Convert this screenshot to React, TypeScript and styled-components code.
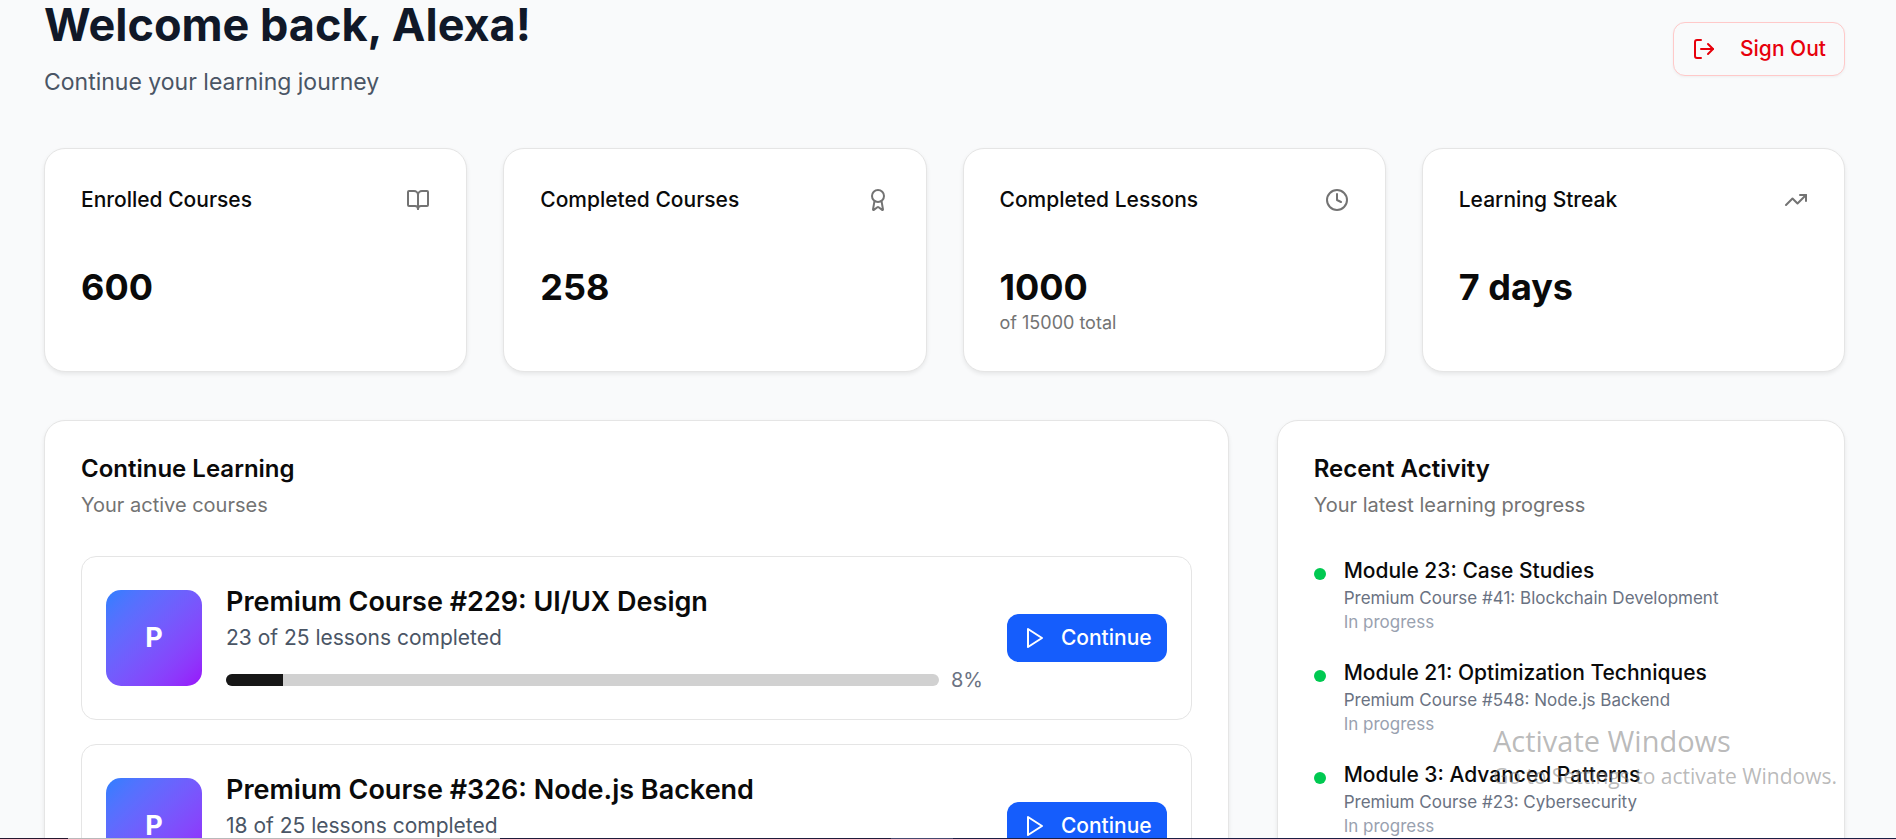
import React from "react";
import styled, { createGlobalStyle } from "styled-components";
import { Award, BookOpen, Clock, LogOut, TrendingUp } from "lucide-react";

const GlobalStyle = createGlobalStyle`
  *, *::before, *::after { box-sizing: border-box; }
  html, body { height: 100%; }
  body {
    margin: 0;
    overflow: hidden;
    background: #f9fafb;
    color: #0a0a0a;
    font-family: Inter, "Liberation Sans", sans-serif;
  }
  #root { height: 100%; }
  h1, h2, h3, p, ul { margin: 0; padding: 0; }
  ul { list-style: none; }
  button { font-family: inherit; cursor: pointer; }
`;

const Viewport = styled.div`
  position: relative;
  display: flex;
  flex-direction: column;
  height: 100%;
`;

const ScrollArea = styled.div`
  flex: 1;
  min-height: 0;
  overflow: hidden;
`;

const TaskbarEdge = styled.div`
  display: flex;
  flex: none;
  height: 1px;
  background: #1c1f45;
`;

const EdgeSegment = styled.span<{ $width: number; $tone: string }>`
  width: ${({ $width }) => $width}px;
  background: ${({ $tone }) => $tone};
`;

const Page = styled.main`
  display: flex;
  flex-direction: column;
  gap: 48px;
  margin-top: -2px;
  padding: 0 51px 48px 44px;
`;

const Header = styled.header`
  display: flex;
  align-items: center;
  justify-content: space-between;
`;

const Heading = styled.div`
  display: flex;
  flex-direction: column;
  gap: 12px;
`;

const PageTitle = styled.h1`
  font-size: 45px;
  line-height: 54px;
  font-weight: 700;
  color: #101828;
`;

const PageSubtitle = styled.p`
  font-size: 23px;
  line-height: 36px;
  color: #4a5565;
`;

const SignOutButton = styled.button`
  display: flex;
  align-items: center;
  gap: 24px;
  height: 54px;
  padding: 0 18px;
  border: 1px solid #ffc9c9;
  border-radius: 12px;
  background: #f9fafb;
  box-shadow: 0 1px 3px rgba(0, 0, 0, 0.05);
  color: #e7000b;
  font-size: 21px;
  line-height: 30px;
  font-weight: 500;
`;

const Card = styled.section`
  display: flex;
  flex-direction: column;
  min-width: 0;
  padding: 36px;
  border: 1px solid #e5e5e5;
  border-radius: 21px;
  background: #fff;
  box-shadow: 0 2px 4px rgba(0, 0, 0, 0.08);
`;

const StatGrid = styled.div`
  display: grid;
  grid-template-columns: repeat(4, 1fr);
  gap: 36px;
`;

const StatHeader = styled.div`
  display: flex;
  align-items: center;
  justify-content: space-between;
  margin-bottom: 48px;
  color: #737373;
`;

const StatLabel = styled.h2`
  font-size: 21px;
  line-height: 30px;
  font-weight: 500;
  color: #0a0a0a;
`;

const StatValue = styled.p`
  font-size: 36px;
  line-height: 48px;
  font-weight: 700;
`;

const StatNote = styled.p`
  font-size: 18px;
  line-height: 24px;
  color: #737373;
`;

const PanelGrid = styled.div`
  display: grid;
  grid-template-columns: repeat(3, 1fr);
  gap: 48px;
`;

const WideCard = styled(Card)`
  grid-column: span 2;
`;

const PanelHeader = styled.div`
  display: flex;
  flex-direction: column;
  gap: 9px;
  margin-bottom: 36px;
`;

const PanelTitle = styled.h2`
  font-size: 24px;
  line-height: 24px;
  font-weight: 600;
`;

const PanelSubtitle = styled.p`
  font-size: 20px;
  line-height: 30px;
  color: #737373;
`;

const Stack = styled.ul`
  display: flex;
  flex-direction: column;
  gap: 24px;
`;

const CourseRow = styled.li`
  display: flex;
  align-items: center;
  gap: 24px;
  padding: 24px;
  border: 1px solid #e5e5e5;
  border-radius: 15px;
`;

const Avatar = styled.div`
  display: grid;
  place-items: center;
  flex: none;
  width: 96px;
  height: 96px;
  border-radius: 15px;
  background: linear-gradient(to bottom right in oklab, #2b7fff, #9810fa);
  color: #fff;
  font-size: 27px;
  line-height: 42px;
  font-weight: 700;
`;

const CourseBody = styled.div`
  flex: 1;
  min-width: 0;
`;

const CourseTitle = styled.h3`
  font-size: 27px;
  line-height: 42px;
  font-weight: 600;
`;

const CourseMeta = styled.p`
  font-size: 21px;
  line-height: 30px;
  color: #4a5565;
`;

const ProgressLine = styled.div`
  display: flex;
  align-items: center;
  gap: 12px;
  margin-top: 12px;
`;

const Track = styled.div`
  flex: 1;
  height: 12px;
  overflow: hidden;
  border-radius: 6px;
  background: #d1d1d1;
`;

const Fill = styled.div`
  height: 100%;
  background: #171717;
`;

const Percent = styled.span`
  font-size: 20px;
  line-height: 30px;
  color: #6a7282;
`;

const ContinueButton = styled.button`
  display: flex;
  align-items: center;
  flex: none;
  gap: 15px;
  height: 48px;
  padding: 0 15px;
  border: 0;
  border-radius: 12px;
  background: #155dfc;
  color: #fff;
  font-size: 21px;
  line-height: 30px;
  font-weight: 500;
`;

const ActivityRow = styled.li`
  display: flex;
  align-items: flex-start;
  gap: 18px;
`;

const Dot = styled.span`
  flex: none;
  width: 12px;
  height: 12px;
  margin-top: 12px;
  border-radius: 50%;
  background: #00c951;
`;

const ActivityTitle = styled.h3`
  font-size: 21px;
  line-height: 30px;
  font-weight: 500;
`;

const ActivityCourse = styled.p`
  font-size: 17px;
  line-height: 24px;
  color: #6a7282;
`;

const ActivityStatus = styled(ActivityCourse)`
  color: #99a1af;
`;

const SystemNotice = styled.aside`
  position: absolute;
  right: 59px;
  bottom: 48px;
  color: rgba(128, 128, 128, 0.55);
  font-family: "Open Sans", "Noto Sans", sans-serif;
  pointer-events: none;
`;

const NoticeTitle = styled.p`
  font-size: 29px;
  line-height: 40px;
`;

const NoticeText = styled.p`
  font-size: 21px;
  line-height: 30px;
`;

const PlayIcon = () => (
  <svg
    width="24"
    height="24"
    viewBox="0 0 24 24"
    fill="none"
    stroke="currentColor"
    strokeWidth="2"
    strokeLinejoin="round"
    aria-hidden="true"
  >
    <polygon points="6 3 20 12 6 21 6 3" />
  </svg>
);

const stats = [
  { label: "Enrolled Courses", value: "600", Icon: BookOpen },
  { label: "Completed Courses", value: "258", Icon: Award },
  { label: "Completed Lessons", value: "1000", note: "of 15000 total", Icon: Clock },
  { label: "Learning Streak", value: "7 days", Icon: TrendingUp },
];

const courses = [
  { title: "Premium Course #229: UI/UX Design", done: 23, total: 25, progress: 8 },
  { title: "Premium Course #326: Node.js Backend", done: 18, total: 25, progress: 8 },
];

const activities = [
  { title: "Module 23: Case Studies", course: "Premium Course #41: Blockchain Development" },
  { title: "Module 21: Optimization Techniques", course: "Premium Course #548: Node.js Backend" },
  { title: "Module 3: Advanced Patterns", course: "Premium Course #23: Cybersecurity" },
];

export default function App() {
  return (
    <Viewport>
      <GlobalStyle />
      <ScrollArea>
        <Page>
          <Header>
            <Heading>
              <PageTitle>Welcome back, Alexa!</PageTitle>
              <PageSubtitle>Continue your learning journey</PageSubtitle>
            </Heading>
            <SignOutButton type="button">
              <LogOut size={24} />
              Sign Out
            </SignOutButton>
          </Header>

          <StatGrid>
            {stats.map(({ label, value, note, Icon }) => (
              <Card key={label}>
                <StatHeader>
                  <StatLabel>{label}</StatLabel>
                  <Icon size={24} />
                </StatHeader>
                <StatValue>{value}</StatValue>
                {note && <StatNote>{note}</StatNote>}
              </Card>
            ))}
          </StatGrid>

          <PanelGrid>
            <WideCard>
              <PanelHeader>
                <PanelTitle>Continue Learning</PanelTitle>
                <PanelSubtitle>Your active courses</PanelSubtitle>
              </PanelHeader>
              <Stack>
                {courses.map((course) => (
                  <CourseRow key={course.title}>
                    <Avatar>{course.title[0]}</Avatar>
                    <CourseBody>
                      <CourseTitle>{course.title}</CourseTitle>
                      <CourseMeta>
                        {`${course.done} of ${course.total} lessons completed`}
                      </CourseMeta>
                      <ProgressLine>
                        <Track
                          role="progressbar"
                          aria-label={course.title}
                          aria-valuenow={course.progress}
                          aria-valuemin={0}
                          aria-valuemax={100}
                        >
                          <Fill style={{ width: `${course.progress}%` }} />
                        </Track>
                        <Percent>{`${course.progress}%`}</Percent>
                      </ProgressLine>
                    </CourseBody>
                    <ContinueButton type="button">
                      <PlayIcon />
                      Continue
                    </ContinueButton>
                  </CourseRow>
                ))}
              </Stack>
            </WideCard>

            <Card>
              <PanelHeader>
                <PanelTitle>Recent Activity</PanelTitle>
                <PanelSubtitle>Your latest learning progress</PanelSubtitle>
              </PanelHeader>
              <Stack>
                {activities.map((activity) => (
                  <ActivityRow key={activity.title}>
                    <Dot />
                    <div>
                      <ActivityTitle>{activity.title}</ActivityTitle>
                      <ActivityCourse>{activity.course}</ActivityCourse>
                      <ActivityStatus>In progress</ActivityStatus>
                    </div>
                  </ActivityRow>
                ))}
              </Stack>
            </Card>
          </PanelGrid>
        </Page>
      </ScrollArea>

      <TaskbarEdge>
        <EdgeSegment $width={68} $tone="#24182f" />
        <EdgeSegment $width={432} $tone="#b9b9bb" />
        <EdgeSegment $width={391} $tone="#1f1c3c" />
        <EdgeSegment $width={62} $tone="#464a70" />
      </TaskbarEdge>

      <SystemNotice>
        <NoticeTitle>Activate Windows</NoticeTitle>
        <NoticeText>Go to Settings to activate Windows.</NoticeText>
      </SystemNotice>
    </Viewport>
  );
}
